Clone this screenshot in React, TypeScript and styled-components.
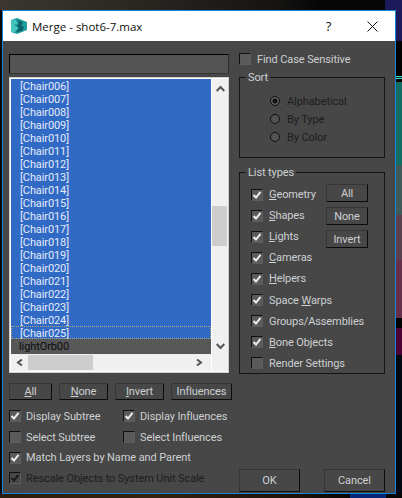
import React from "react";
import styled, { createGlobalStyle } from "styled-components";

const Global = createGlobalStyle`
  * { box-sizing: border-box; }
  html, body { margin: 0; padding: 0; height: 498px; overflow: hidden; }
  body {
    font-family: Roboto, "Noto Sans", sans-serif;
    font-size: 11px;
    letter-spacing: -0.1px;
    background:
      linear-gradient(90deg, transparent 350px, #06267a 350px, #06267a 386px, transparent 386px) 0 494px / 100% 4px no-repeat,
      linear-gradient(90deg, #2c1c0c 0, #33220f 150px, #1a120a 300px, #060606 350px) 0 494px / 100% 4px no-repeat,
      linear-gradient(#1c1a5a 0 41px, #000 41px 76px, #3fd8c8 76px 77px, #0a2a2a 77px 78px, #3fd8c8 78px 79px, #000 79px 82px, #126e64 82px 165px, #3f5a58 165px 215px, #5a3f4c 215px 260px, #66304a 260px 318px, #000 318px 328px, #4a0035 328px 355px, #020812 355px) 396px 0 / 6px 100% no-repeat,
      linear-gradient(90deg, #3b3630 0, #2b2823 130px, #141312 280px, #060606 320px, #060606 385px, #1c1a5a 385px) 0 0 / 100% 10px no-repeat,
      #0c0a08;
  }
`;

const Dialog = styled.div`
  width: 394px;
  height: 484px;
  margin: 10px 0 0 2px;
  border: 1px solid #1784d8;
  background: #474747;
  display: flex;
  flex-direction: column;
  color: #cdd0d2;
`;

const TitleBar = styled.div`
  height: 30px;
  background: #fff;
  display: flex;
  align-items: center;
  color: #111;
  font-family: "Open Sans", sans-serif;
  font-size: 11.5px;
  letter-spacing: 0;
  padding-left: 8px;
  flex: none;
`;

const TitleText = styled.span`
  margin-left: 5px;
  flex: 1;
`;

const Help = styled.span`
  width: 41px;
  text-align: center;
  font-size: 13px;
`;

const CloseBox = styled.span`
  width: 46px;
  display: flex;
  justify-content: center;
`;

const Body = styled.div`
  flex: 1;
  display: flex;
  gap: 10px;
  padding: 13px 10px 0 6px;
`;

const LeftColumn = styled.div`
  width: 220px;
  display: flex;
  flex-direction: column;
`;

const RightColumn = styled.div`
  width: 146px;
  display: flex;
  flex-direction: column;
`;

const SearchBox = styled.div`
  height: 20px;
  background: #545454;
  border-top: 1px solid #000;
  border-left: 1px solid #000;
  border-right: 1px solid #2e2e2e;
  border-bottom: 1px solid #353535;
`;

const ListBox = styled.div`
  margin-top: 3px;
  height: 296px;
  border: 1px solid #cfcfcf;
  background: #fff;
  padding: 1px;
  display: grid;
  grid-template-columns: 200px 17px;
  grid-template-rows: 275px 17px;
`;

const Rows = styled.div`
  background: #575757;
  overflow: hidden;
`;

const Row = styled.div<{ $active?: boolean }>`
  height: 13px;
  padding: 1px 0 0 9px;
  line-height: 13px;
  background: #316ac5;
  color: #e4ebfa;
  white-space: nowrap;
  outline: ${(p) => (p.$active ? "1px dotted #b8a878" : "none")};
  outline-offset: -1px;
`;

const PlainRow = styled.div`
  height: 15px;
  padding: 0 0 0 8px;
  line-height: 15px;
  color: #0c0c0c;
`;

const VScroll = styled.div`
  background: #f0f0f0;
  margin-left: 1px;
  display: flex;
  flex-direction: column;
  align-items: center;
  justify-content: space-between;
  padding-top: 6px;
  padding-bottom: 4px;
  grid-row: 1;
  grid-column: 2;
  position: relative;
`;

const VThumb = styled.div`
  width: 15px;
  height: 40px;
  background: #cdcdcd;
  position: absolute;
  top: 127px;
  left: 0;
`;

const HScroll = styled.div`
  grid-column: 1;
  grid-row: 2;
  background: #f0f0f0;
  display: flex;
  align-items: center;
  justify-content: space-between;
  padding: 0 8px 0 5px;
  position: relative;
`;

const HThumb = styled.div`
  position: absolute;
  left: 17px;
  top: 1px;
  width: 65px;
  height: 15px;
  background: #cdcdcd;
`;

const Corner = styled.div`
  background: #f0f0f0;
  margin-left: 1px;
`;

const ButtonRow = styled.div`
  margin-top: 10px;
  display: flex;
  gap: 7px;
`;

const Btn = styled.div<{ $w: number; $h?: number }>`
  width: ${(p) => p.$w}px;
  height: ${(p) => p.$h ?? 17}px;
  flex: none;
  display: flex;
  align-items: center;
  justify-content: center;
  background: #474747;
  border-top: 1px solid #363636;
  border-left: 1px solid #363636;
  border-right: 1px solid #0c0c0c;
  border-bottom: 1px solid #0c0c0c;
  color: #cdd0d2;
  white-space: nowrap;
`;

const Options = styled.div`
  margin-top: 6px;
  display: grid;
  grid-template-columns: 114px 114px;
  grid-auto-rows: 20.7px;
  align-items: center;
`;

const WideOption = styled.div`
  grid-column: 1 / span 2;
`;

const CheckRow = styled.div<{ $disabled?: boolean; $gap?: number }>`
  display: flex;
  align-items: center;
  gap: ${(p) => p.$gap ?? 5}px;
  white-space: nowrap;
  color: ${(p) => (p.$disabled ? "#1d1d1d" : "inherit")};
`;

const Box = styled.span<{ $disabled?: boolean }>`
  width: 12px;
  height: 12px;
  flex: none;
  background: ${(p) => (p.$disabled ? "#474747" : "#5a5a5a")};
  border-top: 1px solid #111;
  border-left: 1px solid #111;
  border-right: 1px solid #5e5e5e;
  border-bottom: 1px solid #5e5e5e;
  display: flex;
  align-items: center;
  justify-content: center;
`;

const Group = styled.div`
  position: relative;
  border: 1px solid #141414;
`;

const Legend = styled.span`
  position: absolute;
  left: 6px;
  top: -8px;
  line-height: 16px;
  padding: 0 2px;
  background: #474747;
`;

const SortGroup = styled(Group)`
  margin-top: 11px;
  height: 81px;
  padding: 14px 0 0 30px;
`;

const RadioRow = styled.div`
  height: 18px;
  display: flex;
  align-items: center;
  gap: 7px;
  color: #1d1d1d;
`;

const Radio = styled.span<{ $on?: boolean }>`
  width: 10px;
  height: 10px;
  border-radius: 50%;
  background: ${(p) => (p.$on ? "radial-gradient(circle, #111 0 2.2px, #5c5c5c 2.8px)" : "#525252")};
  border: 1px solid #111;
  flex: none;
`;

const TypesGroup = styled(Group)`
  margin-top: 14px;
  height: 202px;
  padding: 11px 0 0 11px;
  display: flex;
`;

const TypesList = styled.div`
  width: 75px;
  flex: none;
`;

const TypeRow = styled.div`
  height: 21.1px;
  display: flex;
  align-items: center;
`;

const TypeButtons = styled.div`
  display: flex;
  flex-direction: column;
  gap: 5px;
`;

const Footer = styled.div`
  margin-top: auto;
  margin-bottom: 1px;
  display: flex;
  justify-content: space-between;
`;

const Find = styled.div`
  height: 12px;
  margin-top: -1px;
  margin-bottom: 1px;
  display: flex;
  align-items: center;
`;

const Check = ({ dark }: { dark?: boolean }) => (
  <svg width="10" height="10" viewBox="0 0 10 10">
    <path d="M1.5 5 L4 7.5 L8.5 1.8" fill="none" stroke={dark ? "#1a1a1a" : "#eee"} strokeWidth="2" />
  </svg>
);

const Chevron = ({ d }: { d: string }) => (
  <svg width="9" height="7" viewBox="0 0 9 7">
    <path d={d} fill="none" stroke="#555" strokeWidth="2" />
  </svg>
);

const Logo = () => (
  <svg width="16" height="16" viewBox="0 0 16 16">
    <path d="M0 2 L6 0 L16 4 L16 12 L6 16 L0 14 Z" fill="#1f9c9c" />
    <path d="M5 2 L12 4 L10 7.5 L13 9 L11 13 L5 14 L8 10 L6 8 L8 5 Z" fill="#0c5f68" />
    <path d="M0 2 L5 2 L7 5 L3 7 L7 10 L4 14 L0 14 Z" fill="#46c4c0" />
  </svg>
);

const chairs = Array.from({ length: 20 }, (_, i) => `[Chair${String(i + 6).padStart(3, "0")}]`);

const Key = styled.u`
  text-underline-offset: 1px;
`;

const Label = ({ text, k }: { text: string; k?: string }) => {
  if (!k) return <span>{text}</span>;
  const i = text.indexOf(k);
  return (
    <span>
      {text.slice(0, i)}
      <Key>{k}</Key>
      {text.slice(i + 1)}
    </span>
  );
};

const types: [string, string | undefined, boolean][] = [
  ["Geometry", "G", true],
  ["Shapes", "S", true],
  ["Lights", "L", true],
  ["Cameras", "C", true],
  ["Helpers", "H", true],
  ["Space Warps", "W", true],
  ["Groups/Assemblies", undefined, true],
  ["Bone Objects", "B", true],
  ["Render Settings", undefined, false],
];

export default function App() {
  return (
    <>
      <Global />
      <Dialog>
        <TitleBar>
          <Logo />
          <TitleText>Merge - shot6-7.max</TitleText>
          <Help>?</Help>
          <CloseBox>
            <svg width="11" height="11" viewBox="0 0 11 11">
              <path d="M0.5 0.5 L10.5 10.5 M10.5 0.5 L0.5 10.5" stroke="#111" strokeWidth="1" />
            </svg>
          </CloseBox>
        </TitleBar>
        <Body>
          <LeftColumn>
            <SearchBox />
            <ListBox>
              <Rows>
                {chairs.map((c, i) => (
                  <Row key={c} $active={i === chairs.length - 1}>
                    {c}
                  </Row>
                ))}
                <PlainRow>lightOrb00</PlainRow>
              </Rows>
              <VScroll>
                <Chevron d="M0.7 6 L4.5 2 L8.3 6" />
                <VThumb />
                <Chevron d="M0.7 1 L4.5 5 L8.3 1" />
              </VScroll>
              <HScroll>
                <Chevron d="M6 0.5 L2 3.5 L6 6.5" />
                <HThumb />
                <Chevron d="M3 0.5 L7 3.5 L3 6.5" />
              </HScroll>
              <Corner />
            </ListBox>
            <ButtonRow>
              <Btn $w={43}><Label text="All" k="A" /></Btn>
              <Btn $w={49}><Label text="None" k="N" /></Btn>
              <Btn $w={49}><Label text="Invert" k="I" /></Btn>
              <Btn $w={61}>Influences</Btn>
            </ButtonRow>
            <Options>
              <CheckRow><Box><Check /></Box>Display Subtree</CheckRow>
              <CheckRow><Box><Check /></Box>Display Influences</CheckRow>
              <CheckRow><Box />Select Subtree</CheckRow>
              <CheckRow><Box />Select Influences</CheckRow>
              <WideOption><CheckRow><Box><Check /></Box>Match Layers by Name and Parent</CheckRow></WideOption>
              <WideOption><CheckRow $disabled><Box $disabled><Check dark /></Box>Rescale Objects to System Unit Scale</CheckRow></WideOption>
            </Options>
          </LeftColumn>
          <RightColumn>
            <Find><CheckRow $gap={6}><Box />Find Case Sensitive</CheckRow></Find>
            <SortGroup>
              <Legend>Sort</Legend>
              <RadioRow><Radio $on />Alphabetical</RadioRow>
              <RadioRow><Radio />By Type</RadioRow>
              <RadioRow><Radio />By Color</RadioRow>
            </SortGroup>
            <TypesGroup>
              <Legend>List types</Legend>
              <TypesList>
                {types.map(([t, k, on]) => (
                  <TypeRow key={t}>
                    <CheckRow $gap={6}>
                      <Box>{on && <Check />}</Box>
                      <Label text={t} k={k} />
                    </CheckRow>
                  </TypeRow>
                ))}
              </TypesList>
              <TypeButtons>
                <Btn $w={42} $h={18}>All</Btn>
                <Btn $w={42} $h={18}>None</Btn>
                <Btn $w={42} $h={18}>Invert</Btn>
              </TypeButtons>
            </TypesGroup>
            <Footer>
              <Btn $w={61} $h={23}>OK</Btn>
              <Btn $w={61} $h={23}>Cancel</Btn>
            </Footer>
          </RightColumn>
        </Body>
      </Dialog>
    </>
  );
}
